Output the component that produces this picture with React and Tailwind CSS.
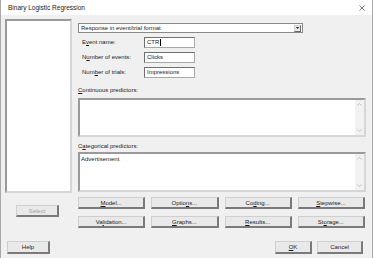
function Btn({ children, className = "", disabled = false }) {
  return (
    <div
      className={
        "flex items-center justify-center bg-[#e9e9e9] border border-[#cfcfcf] border-r-2 border-b-2 border-r-[#7a7a7a] border-b-[#7a7a7a] text-[6px] leading-none " +
        (disabled ? "text-[#a3a3a3] " : "text-[#1a1a1a] ") +
        className
      }
    >
      {children}
    </div>
  );
}

function Field({ label, value, cursor }) {
  return (
    <div className="flex items-center h-[11px] mt-[4px]">
      <div className="w-[66px] pl-[4px] text-[6px] text-[#1a1a1a]">{label}</div>
      <div className="w-[51px] h-[11px] bg-white border border-[#a8a8a8] border-t-[#707070] border-l-[#707070] flex items-center pl-[2px] text-[6px] text-[#1a1a1a]">
        {value}
        {cursor && <span className="w-px h-[7px] bg-black ml-px"></span>}
      </div>
    </div>
  );
}

function ScrollBox({ h, children }) {
  return (
    <div
      className={
        "flex w-[288px] bg-white border-2 border-[#9a9a9a] border-r-[#d6d6d6] border-b-[#d6d6d6] " + h
      }
    >
      <div className="flex-1 pl-[1px] pt-[1px] text-[6px] text-[#1a1a1a] leading-[8px]">{children}</div>
      <div className="w-[9px] bg-[#f2f2f2] flex flex-col justify-between items-center py-[3px]">
        <svg width="5" height="3" viewBox="0 0 5 3">
          <path d="M0.5 2.5 L2.5 0.5 L4.5 2.5" fill="none" stroke="#b5b5b5" strokeWidth="0.8" />
        </svg>
        <svg width="5" height="3" viewBox="0 0 5 3">
          <path d="M0.5 0.5 L2.5 2.5 L4.5 0.5" fill="none" stroke="#b5b5b5" strokeWidth="0.8" />
        </svg>
      </div>
    </div>
  );
}

export default function App() {
  return (
    <div
      className="w-[373px] h-[258px] bg-[#f0f0f0] border-l border-r border-[#a9a9a9] flex flex-col overflow-hidden"
      style={{ fontFamily: '"Liberation Sans", Arial, sans-serif' }}
    >
      {/* Title bar */}
      <div className="h-[15px] bg-white flex items-center justify-between pl-[7px] pr-[7px]">
        <span className="text-[6.5px] text-[#1a1a1a]">Binary Logistic Regression</span>
        <svg width="6" height="6" viewBox="0 0 6 6">
          <path d="M0.5 0.5 L5.5 5.5 M5.5 0.5 L0.5 5.5" stroke="#333" strokeWidth="0.7" />
        </svg>
      </div>

      <div className="flex">
        {/* Left column */}
        <div className="ml-[4px] w-[67px] flex flex-col">
          <div className="mt-[4px] h-[174px] bg-white border-2 border-[#9a9a9a] border-r-[#d6d6d6] border-b-[#d6d6d6]"></div>
          <Btn disabled className="mt-[12px] ml-[11px] w-[43px] h-[12px]">Select</Btn>
        </div>

        {/* Right column */}
        <div className="ml-[6px] w-[288px] flex flex-col">
          <div className="mt-[8px] w-[225px] h-[10px] bg-white border border-[#8a8a8a] flex items-center justify-between pl-[2px] pr-[1px]">
            <span className="text-[6px] text-[#1a1a1a] leading-none">Response in event/trial format</span>
            <div className="w-[7px] h-[7px] bg-[#e9e9e9] border border-[#cfcfcf] border-r-[#6a6a6a] border-b-[#6a6a6a] flex items-center justify-center">
              <svg width="3" height="2" viewBox="0 0 3 2">
                <path d="M0 0 H3 L1.5 2 Z" fill="#111" />
              </svg>
            </div>
          </div>

          <Field label={<>E<u>v</u>ent name:</>} value="CTR" cursor />
          <Field label={<>N<u>u</u>mber of events:</>} value="Clicks" />
          <Field label={<>Num<u>b</u>er of trials:</>} value="Impressions" />

          <div className="mt-[7px] h-[10px] flex items-center text-[6px] text-[#1a1a1a]">
            <span><u>C</u>ontinuous predictors:</span>
          </div>
          <div className="mt-[3px]">
            <ScrollBox h="h-[39px]" />
          </div>

          <div className="mt-[4px] h-[10px] flex items-center text-[6px] text-[#1a1a1a]">
            <span>C<u>a</u>tegorical predictors:</span>
          </div>
          <div className="mt-[1px]">
            <ScrollBox h="h-[40px]">Advertisement</ScrollBox>
          </div>

          <div className="mt-[5px] grid grid-cols-4 gap-x-[6px] gap-y-[7px] w-[287px]">
            <Btn className="h-[12px]"><span><u>M</u>odel...</span></Btn>
            <Btn className="h-[12px]"><span>Optio<u>n</u>s...</span></Btn>
            <Btn className="h-[12px]"><span>Co<u>d</u>ing...</span></Btn>
            <Btn className="h-[12px]"><span><u>S</u>tepwise...</span></Btn>
            <Btn className="h-[12px]"><span>Va<u>l</u>idation...</span></Btn>
            <Btn className="h-[12px]"><span><u>G</u>raphs...</span></Btn>
            <Btn className="h-[12px]"><span><u>R</u>esults...</span></Btn>
            <Btn className="h-[12px]"><span>St<u>o</u>rage...</span></Btn>
          </div>
        </div>
      </div>

      {/* Bottom row */}
      <div className="mt-[13px] flex items-center">
        <Btn className="ml-[6px] w-[43px] h-[13px]">Help</Btn>
        <div className="flex-1"></div>
        <Btn className="w-[37px] h-[13px]"><span><u>O</u>K</span></Btn>
        <Btn className="ml-[5px] w-[46px] h-[13px] mr-[9px]">Cancel</Btn>
      </div>
    </div>
  );
}
